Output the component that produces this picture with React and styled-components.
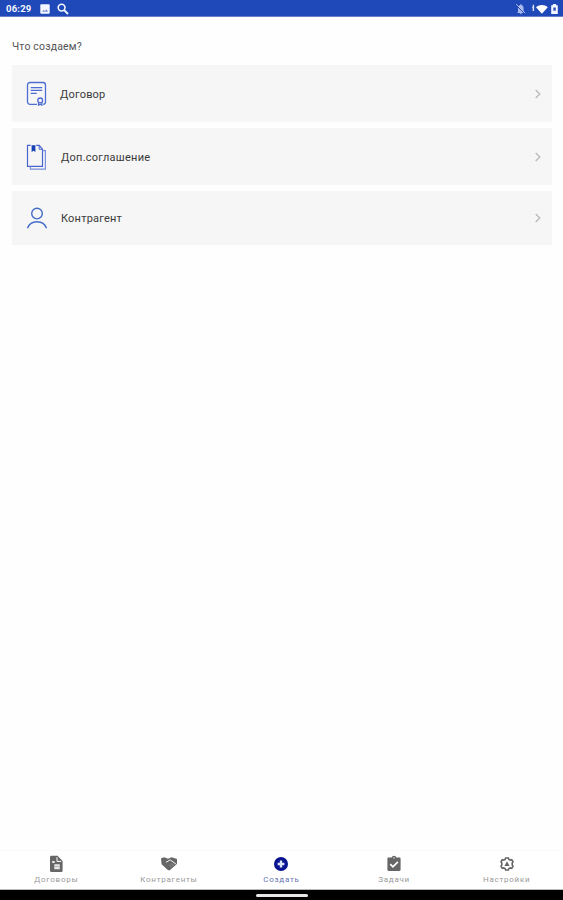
import styled, { createGlobalStyle } from "styled-components";

const createItems = [
    { label: "Договор", icon: ContractIcon, height: 57, indent: 60, spacing: 0.2 },
    { label: "Доп.соглашение", icon: AgreementIcon, height: 57, indent: 61, spacing: 0.25 },
    { label: "Контрагент", icon: PersonIcon, height: 54, indent: 61, spacing: 0.2 },
];

const tabs = [
    { label: "Договоры", icon: DocumentIcon },
    { label: "Контрагенты", icon: HandshakeIcon },
    { label: "Создать", icon: PlusIcon, active: true },
    { label: "Задачи", icon: TasksIcon },
    { label: "Настройки", icon: SettingsIcon },
];

const App = () => {
    return (
        <Screen>
            <GlobalStyle />
            <StatusBar>
                <StatusGroup>
                    <Clock>06:29</Clock>
                    <GalleryIcon />
                    <SearchIcon />
                </StatusGroup>
                <StatusIcons />
            </StatusBar>
            <Content>
                <Title>Что создаем?</Title>
                <List>
                    {createItems.map(({ label, icon: Icon, height, indent, spacing }) => (
                        <Row key={label} $height={height}>
                            <IconSlot $width={indent - 26}>
                                <Icon />
                            </IconSlot>
                            <RowLabel $spacing={spacing}>{label}</RowLabel>
                            <Chevron />
                        </Row>
                    ))}
                </List>
            </Content>
            <TabBar>
                {tabs.map(({ label, icon: Icon, active }) => (
                    <Tab key={label}>
                        <Icon />
                        <TabLabel $active={active}>{label}</TabLabel>
                    </Tab>
                ))}
            </TabBar>
            <SystemBar>
                <HomeHandle />
            </SystemBar>
        </Screen>
    );
};

function GalleryIcon() {
    return (
        <svg width="10" height="10" viewBox="0 0 10 10">
            <rect x="0.3" y="0.3" width="9.4" height="9.4" rx="1" fill="#f4f7ff" />
            <path d="M2 7.7 3.7 5.8 4.9 7 6.5 5.2 8.2 7.7Z" fill="#7f93d3" />
        </svg>
    );
}

function SearchIcon() {
    return (
        <svg width="12" height="12" viewBox="0 0 12 12" fill="none" stroke="#f4f7ff">
            <circle cx="4.6" cy="4.6" r="3.4" strokeWidth="1.6" />
            <path d="M7.2 7.2 11 11" strokeWidth="1.9" />
        </svg>
    );
}

function StatusIcons() {
    return (
        <svg width="44" height="12" viewBox="0 0 44 12">
            <g fill="#a9b8ea">
                <path d="M3 9V5.2C3 3.3 4 2.4 5.2 2V1.2h1.3V2C7.8 2.4 8.6 3.4 8.6 5.2V9l.9.9H2Z" />
                <path d="M4.8 10.3h2.1a1 1 0 0 1-2.1 0Z" />
            </g>
            <path d="M1.2 2.2 10 11" stroke="#1f48b8" strokeWidth="1" />
            <path d="M1.2 1.2 10.2 10.2" stroke="#c3cef2" strokeWidth="0.9" />
            <path d="M18.4 1.8v6.2M17.2 4.5h2" stroke="#d9e1fa" strokeWidth="1.4" />
            <path d="M21 4.2C24.2 1.1 29.6 1.1 32.8 4.2L26.9 10.8Z" fill="#fff" />
            <path d="M36.2 2.3h1.7V1h3.2v1.3h1.7v8.7h-6.6Z" fill="#f4f7ff" />
            <rect x="38.3" y="4.5" width="2.5" height="3.2" fill="#3655b5" />
        </svg>
    );
}

function ContractIcon() {
    return (
        <svg width="22" height="25" viewBox="0 0 22 25" fill="none" stroke="#4f6cd2">
            <path d="M11 23.3H4a2.5 2.5 0 0 1-2.5-2.5V4a2.5 2.5 0 0 1 2.5-2.5h13A2.5 2.5 0 0 1 19.5 4v16.8c0 1.5-.8 2.5-2.3 2.5" strokeWidth="1.3" />
            <path d="M4.7 6.7h11.5M4.7 9.4h11.5M4.7 12.4h6" strokeWidth="1.2" />
            <circle cx="14.2" cy="19.4" r="2.4" strokeWidth="1.3" />
            <path d="M12.5 21.2v3l1.7-1 1.7 1v-3" strokeWidth="1.2" />
        </svg>
    );
}

function AgreementIcon() {
    return (
        <svg width="22" height="26" viewBox="0 0 22 26" fill="none" stroke="#4665cf">
            <path d="M4.7 1.3H1.5v21.1h15V5.1l-3.3-3.8h-3" strokeWidth="1.2" />
            <path d="M13.2 1.5v3.8h3.3" strokeWidth="1" />
            <path d="M4.4 22.6v2.5h15V6.6h-2.8" stroke="#7990dc" strokeWidth="1.2" />
            <path d="M5.6 1.2h3.8v6.7L7.5 6.7 5.6 7.9Z" fill="#1741b5" stroke="none" />
        </svg>
    );
}

function PersonIcon() {
    return (
        <svg width="22" height="24" viewBox="0 0 22 24" fill="none" stroke="#456bc8" strokeWidth="1.4">
            <circle cx="11" cy="7.6" r="5.3" />
            <path d="M1.5 22.2C3 17.7 6.6 15.7 11 15.7s8 2 9.5 6.5" />
        </svg>
    );
}

function Chevron() {
    return (
        <svg width="8" height="10" viewBox="0 0 8 10" fill="none" stroke="#b9b9b9" strokeWidth="1.3">
            <path d="M1.7 1 5.8 5 1.7 9" />
        </svg>
    );
}

function DocumentIcon() {
    return (
        <svg width="16" height="18" viewBox="0 0 16 18">
            <path d="M3.4 .8h6.1L14.6 6v9.7a1.4 1.4 0 0 1-1.4 1.4H3.4A1.4 1.4 0 0 1 2 15.7V2.2C2 1.4 2.6.8 3.4.8Z" fill="#666" />
            <path d="M9 2.2v4.2h4.2" fill="none" stroke="#fff" />
            <path d="M4.2 6h2.5v2H4.2ZM6.3 9.3h5.5v4.9H6.3Z" fill="#e8e8e8" />
            <path d="M6.3 11.5h5.5" stroke="#999" strokeWidth="0.6" />
        </svg>
    );
}

function HandshakeIcon() {
    return (
        <svg width="18" height="18" viewBox="0 0 18 18">
            <path d="M1 3.3 4.3 2.3 8 3.7 11.7 2.3 17 4.1V9L9.4 15.5 7.5 14.7 1.6 9.2Z" fill="#666" />
            <path d="M6 7.3 10.2 4.9 16.4 9.4" fill="none" stroke="#f4f4f4" strokeWidth="1" />
            <path d="m11 8.6 3 2.3M9.3 10l2.4 2.1" fill="none" stroke="#aaa" strokeWidth="0.6" />
        </svg>
    );
}

function PlusIcon() {
    return (
        <svg width="16" height="18" viewBox="0 0 16 18">
            <circle cx="8" cy="9" r="7" fill="#07138f" />
            <path d="M8 5.6v6.8M4.6 9h6.8" stroke="#dce6fa" strokeWidth="2.4" />
        </svg>
    );
}

function TasksIcon() {
    return (
        <svg width="16" height="18" viewBox="0 0 16 18">
            <path d="M2.6 2.6h3a2.5 2.5 0 0 1 4.8 0h3c.7 0 1.2.5 1.2 1.2v10.9c0 .7-.5 1.2-1.2 1.2H2.6c-.7 0-1.2-.5-1.2-1.2V3.8c0-.7.5-1.2 1.2-1.2Z" fill="#666" />
            <circle cx="8" cy="2.9" r="0.7" fill="#fff" />
            <path d="m4.3 9.2 2.6 2.6 5-5" fill="none" stroke="#fff" strokeWidth="1.7" />
        </svg>
    );
}

function SettingsIcon() {
    return (
        <svg width="16" height="18" viewBox="0 0 16 18" fill="none" stroke="#666">
            <path d="M6.6 3h2.8l.5 1.4 1.4.7 1.4-.4 1.3 2.1-.8 1.2v2l.8 1.2-1.3 2.1-1.4-.4-1.4.7-.5 1.4H6.6l-.5-1.4-1.4-.7-1.4.4L2 11.2l.8-1.2V8L2 6.8l1.3-2.1 1.4.4 1.4-.7Z" strokeWidth="1.6" />
            <path d="M8 6.3 10.6 11H5.4Z" fill="#666" stroke="none" />
        </svg>
    );
}

const GlobalStyle = createGlobalStyle`
body {
    margin: 0;
    background: #fff;
    font-family: Roboto, "Noto Sans", sans-serif;
}
* {
    box-sizing: border-box;
}
svg {
    display: block;
    flex-shrink: 0;
}
`;

const Screen = styled.div`
display: flex;
flex-direction: column;
width: 563px;
height: 900px;
overflow: hidden;
background: #fefefe;
`;

const StatusBar = styled.header`
display: flex;
justify-content: space-between;
align-items: center;
height: 17px;
padding: 1px 4px 0 6px;
background: #1f48b8;
border-bottom: 1px solid #6981c9;
`;

const StatusGroup = styled.div`
display: flex;
align-items: center;
gap: 7px;
`;

const Clock = styled.span`
width: 27px;
font-size: 9.5px;
font-weight: 700;
line-height: 12px;
letter-spacing: 0.2px;
color: #f4f7ff;
`;

const Content = styled.main`
flex: 1;
padding: 22px 11px 0 12px;
`;

const Title = styled.h1`
margin: 0 0 11px;
font-size: 10.5px;
font-weight: 400;
line-height: 15px;
letter-spacing: 0.18px;
color: #555;
`;

const List = styled.div`
display: flex;
flex-direction: column;
gap: 6px;
`;

const Row = styled.div`
display: flex;
align-items: center;
height: ${(props) => props.$height}px;
padding: 0 10px 0 14px;
background: #f6f6f6;
`;

const IconSlot = styled.div`
width: ${(props) => props.$width}px;
`;

const RowLabel = styled.span`
flex: 1;
padding-top: 2px;
font-size: 11px;
line-height: 16px;
letter-spacing: ${(props) => props.$spacing}px;
color: #3a3a3a;
`;

const TabBar = styled.nav`
display: flex;
height: 40px;
border-top: 1px solid #fafafa;
border-bottom: 1px solid #bbb;
background: #fff;
`;

const Tab = styled.div`
flex: 1;
display: flex;
flex-direction: column;
align-items: center;
padding-top: 4px;
`;

const TabLabel = styled.span`
margin-top: 1px;
font-size: 8px;
line-height: 12px;
letter-spacing: 0.75px;
color: ${(props) => (props.$active ? "#6674b0" : "#999")};
`;

const SystemBar = styled.footer`
display: flex;
justify-content: center;
height: 10px;
padding-top: 4px;
background: #000;
`;

const HomeHandle = styled.div`
width: 52px;
height: 3px;
border-radius: 2px;
background: #e6e6e6;
`;

export default App;
